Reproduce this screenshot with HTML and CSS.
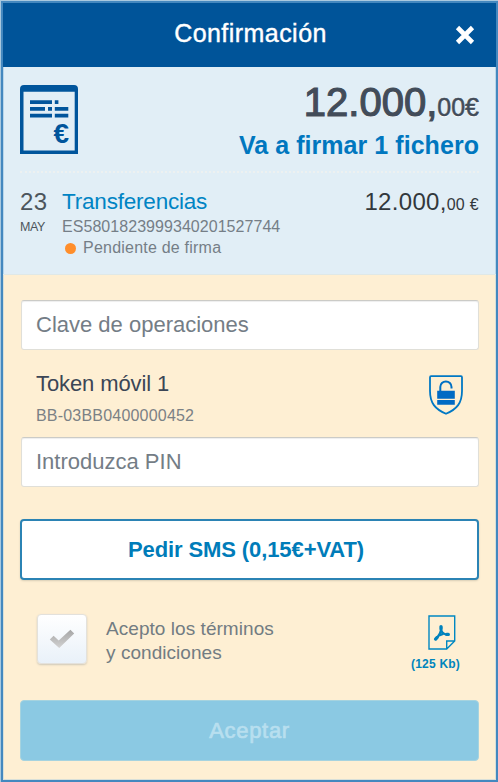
FILE: index.html
```html
<!DOCTYPE html>
<html lang="es">
<head>
<meta charset="utf-8">
<title>Confirmación</title>
<link rel="stylesheet" href="styles.css">
</head>
<body>
<main class="dialog">
  <header class="header">
    <h1 class="title">Confirmación</h1>
    <button class="close" aria-label="Cerrar">
      <svg width="20" height="20" viewBox="0 0 20 20"><path d="M2.5 2.5 17.5 17.5M17.5 2.5 2.5 17.5" fill="none" stroke="#fff" stroke-width="4.6"/></svg>
    </button>
  </header>

  <section class="summary">
    <div class="overview">
      <svg class="doc" width="58" height="69" viewBox="0 0 58 69" fill="#00559c">
        <path fill-rule="evenodd" d="M0 69V4Q0 0 4 0H54Q58 0 58 4V69ZM3.5 6.7V65.5H54.7V6.7Z"/>
        <path d="M10 15.3h22v3.7H10zM34.8 15.3h3.6v3.7h-3.6zM10 22h15v3.7H10zM28 22h4v3.7h-4zM34.8 22h13.5v3.7H34.8zM10 28.7h22v3.7H10zM34.8 28.7h13.5v3.7H34.8z"/>
        <text class="doc-euro" x="33.4" y="58.4" textLength="15.5" lengthAdjust="spacingAndGlyphs">€</text>
      </svg>
      <div class="totals">
        <p class="total">12.000,<span class="cents">00€</span></p>
        <p class="files">Va a firmar 1 fichero</p>
      </div>
    </div>
    <div class="entry">
      <div class="date"><p class="day">23</p><p class="month">MAY</p></div>
      <div class="detail">
        <p class="kind">Transferencias</p>
        <p class="account">ES5801823999340201527744</p>
        <p class="status"><i class="dot"></i>Pendiente de firma</p>
      </div>
      <p class="amount">12.000,<span class="amount-cents">00 €</span></p>
    </div>
  </section>

  <section class="form">
    <div class="field"><span>Clave de operaciones</span></div>
    <div class="token">
      <div>
        <p class="token-name">Token móvil 1</p>
        <p class="token-id">BB-03BB0400000452</p>
      </div>
      <svg class="shield" width="34" height="40" viewBox="0 0 34 40">
        <path d="M2 1.2H32Q33 1.2 33 2.4V16C33 28 28 34 17 38.8C6 34 1 28 1 16V2.4Q1 1.2 2 1.2Z" fill="none" stroke="#0078c4" stroke-width="1.8"/>
        <path d="M11.3 16.5V12a5.6 5.6 0 0 1 11.2 0V13.4" fill="none" stroke="#0070c4" stroke-width="2"/>
        <path d="M8.2 15.8h17.6v8H8.2zM8.2 25h17.6v4.7H8.2z" fill="#006ac4"/>
      </svg>
    </div>
    <div class="field"><span>Introduzca PIN</span></div>
    <button class="sms"><span>Pedir SMS (0,15€+VAT)</span></button>
    <div class="terms">
      <div class="checkbox">
        <svg width="26" height="20" viewBox="0 0 26 20">
          <defs><linearGradient id="tick" x1="0" y1="0" x2="0" y2="1"><stop offset="0" stop-color="#a6a6a6"/><stop offset="1" stop-color="#d2d2d2"/></linearGradient></defs>
          <path d="M.8 10.4 4.6 6.8 9.7 11.4 21.4.8 25.2 4.6 10.2 19Z" fill="url(#tick)"/>
        </svg>
      </div>
      <p class="terms-text">Acepto los términos<br>y condiciones</p>
      <div class="pdf">
        <svg width="28" height="35" viewBox="0 0 28 35">
          <path d="M1 1H26.7V26L18.7 34H1ZM18.7 34V26H26.7" fill="none" stroke="#0088c2" stroke-width="1.4"/>
          <path d="M13.2 12.2C13.4 16 12.8 19 7.6 24M13.2 15Q15 20 20.2 19.5M10.5 20.6 15 18.9" fill="none" stroke="#0082bd" stroke-width="2.2" stroke-linecap="round"/>
          <path d="M13 11.6V14M7.6 24.1 9.2 22.4M18.7 19.4H20.3" stroke="#0082bd" stroke-width="3.3" stroke-linecap="round"/>
        </svg>
        <span class="size">(125 Kb)</span>
      </div>
    </div>
    <button class="accept"><span>Aceptar</span></button>
  </section>
</main>
</body>
</html>
```
FILE: styles.css
```css
* { box-sizing: border-box; }
body { margin: 0; background: #a9c9df; font-family: "Liberation Sans", Arial, sans-serif; }
p, h1 { margin: 0; }
p, span { white-space: nowrap; }
button { font-family: inherit; padding: 0; cursor: pointer; }

.dialog {
  width: 497px;
  height: 781px;
  margin: 1px 0 0 1px;
  border: 2px solid #4488bf;
  display: flex;
  flex-direction: column;
  background: #feefd3;
}

.header {
  height: 64px;
  flex: none;
  display: grid;
  grid-template-columns: 40px 1fr 40px;
  align-items: center;
  background: #005499;
}
.title {
  grid-column: 2;
  text-align: center;
  color: #fff;
  font-size: 25px;
  font-weight: 400;
  line-height: 28px;
  letter-spacing: .45px;
  padding: 0 0 4px 2px;
  -webkit-text-stroke: .4px #fff;
}
.close { border: 0; background: none; height: 20px; width: 20px; margin: 0 0 1px -1px; }
.close svg { display: block; }

.summary {
  height: 208px;
  flex: none;
  padding: 0 17px;
  background: #e1eef6;
  border-bottom: 1px solid #dfe8e7;
  box-shadow: inset 1px 0 #b9d6ea, inset -1px 0 #b9d6ea;
}
.overview {
  height: 106px;
  display: flex;
  justify-content: space-between;
  padding-top: 13px;
  border-bottom: 2px dotted #edf1f1;
}
.doc { margin-top: 5px; }
.doc-euro { font-size: 27px; font-weight: 700; }
.totals { text-align: right; }
.total { color: #424c59; font-size: 40px; line-height: 44px; -webkit-text-stroke: 1.2px #424c59; text-shadow: 0 1px #fff; }
.cents { font-size: 25px; -webkit-text-stroke: .5px #424c59; }
.files { margin-top: 1px; color: #0077bf; font-size: 25px; font-weight: 700; line-height: 30px; letter-spacing: .05px; }

.entry { display: flex; padding-top: 15px; }
.date { width: 42px; color: #4c555c; }
.day { font-size: 24px; line-height: 28px; letter-spacing: .3px; }
.month { margin-top: 3px; font-size: 12.5px; line-height: 16px; letter-spacing: -.4px; }
.detail { flex: 1; color: #757e87; font-size: 16px; line-height: 22px; }
.kind { color: #0084c4; font-size: 22.5px; line-height: 28px; letter-spacing: -.2px; }
.account { line-height: 21px; letter-spacing: .05px; }
.status { display: flex; align-items: center; letter-spacing: .22px; line-height: 22px; }
.dot { width: 11px; height: 11px; margin: 0 7px 0 3px; border-radius: 50%; background: #ff8e2b; }
.amount { color: #32383c; font-size: 24px; line-height: 28px; letter-spacing: .3px; }
.amount-cents { font-size: 16px; }

.form {
  flex: 1;
  display: flex;
  flex-direction: column;
  padding: 25px 17px 0;
  box-shadow: inset 1px 0 #d8dfd8, inset -1px 0 #d8dfd8, inset 0 -1px #d8dfd8;
}
.field {
  height: 50px;
  margin: 0 0 0 1px;
  padding-left: 14px;
  border: 1px solid #e0dfd8;
  border-top-color: #cbcbc7;
  border-radius: 3px;
  background: #fff;
  box-shadow: inset 0 1px 1px #eee;
  color: #747d86;
  font-size: 22px;
  line-height: 47px;
}
.token { height: 87px; display: flex; justify-content: space-between; padding: 20px 16px 0 16px; }
.token-name { color: #3b4656; font-size: 22px; line-height: 28px; letter-spacing: -.1px; }
.token-id { margin-top: 7px; color: #7b8185; font-size: 16px; line-height: 22px; letter-spacing: .2px; }
.shield { margin-top: 5px; }

.sms {
  height: 61px;
  flex: none;
  margin-top: 32px;
  border: 2px solid #2b83b4;
  border-radius: 4px;
  background: #fff;
  box-shadow: 0 1px 2px #d8cdb5;
  color: #007cb9;
  font-size: 22px;
  font-weight: 700;
}
.sms span { margin-right: 7px; letter-spacing: -.1px; }

.terms { height: 120px; flex: none; display: flex; padding: 34px 17px 0; }
.checkbox {
  width: 50px;
  height: 50px;
  display: flex;
  align-items: center;
  justify-content: center;
  border: 1px solid #e3e1dc;
  border-radius: 4px;
  background: linear-gradient(#fff, #e9f1f9);
  box-shadow: 0 1px 2px #cfc8b9;
}
.terms-text { flex: 1; margin: 3px 0 0 19px; color: #727c82; font-size: 19px; line-height: 24px; letter-spacing: .05px; }
.pdf { display: flex; flex-direction: column; align-items: center; margin: 1px 2px 0 0; }
.pdf svg { margin-left: 13px; }
.size { margin-top: 6px; color: #0085bd; font-size: 12px; font-weight: 700; line-height: 16px; letter-spacing: .2px; }

.accept {
  height: 61px;
  flex: none;
  border: 1px solid #a6d3df;
  border-radius: 4px;
  background: #8bc9e3;
  color: #b8dfef;
  font-size: 22px;
  letter-spacing: .7px;
  -webkit-text-stroke: .7px #b8dfef;
}
```
